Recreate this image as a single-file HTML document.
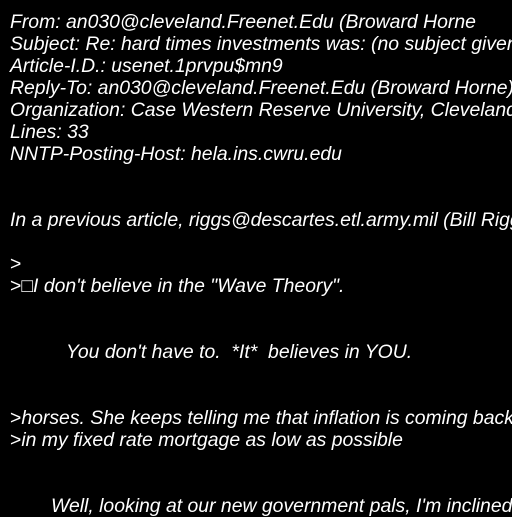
<!DOCTYPE html>
<html><head><style>
html,body{margin:0;padding:0;background:#000;width:512px;height:512px;overflow:hidden}
.l{position:absolute;left:10px;white-space:pre;color:#fff;font-family:"Liberation Sans",sans-serif;font-style:italic;font-size:19.4px;line-height:22px}
.n{font-style:normal}
</style></head><body>
<div class="l" style="top:11px">From: an030@cleveland.Freenet.Edu (Broward Horne</div>
<div class="l" style="top:33px">Subject: Re: hard times investments was: (no subject given)</div>
<div class="l" style="top:55px">Article-I.D.: usenet.1prvpu$mn9</div>
<div class="l" style="top:77px">Reply-To: an030@cleveland.Freenet.Edu (Broward Horne)</div>
<div class="l" style="top:99px">Organization: Case Western Reserve University, Cleveland, OH</div>
<div class="l" style="top:121px">Lines: 33</div>
<div class="l" style="top:143px">NNTP-Posting-Host: hela.ins.cwru.edu</div>
<div class="l" style="top:209px">In a previous article, riggs@descartes.etl.army.mil (Bill Riggs) says:</div>
<div class="l" style="top:253px"><span class="n">&gt;</span></div>
<div class="l" style="top:275px"><span class="n">&gt;□</span>I don't believe in the "Wave Theory".</div>
<div class="l" style="top:341px;left:66px">You don't have to.  *It*  believes in YOU.</div>
<div class="l" style="top:407px"><span class="n">&gt;</span>horses. She keeps telling me that inflation is coming back</div>
<div class="l" style="top:429px"><span class="n">&gt;</span>in my fixed rate mortgage as low as possible</div>
<div class="l" style="top:495px;left:51px">Well, looking at our new government pals, I'm inclined</div>
</body></html>
